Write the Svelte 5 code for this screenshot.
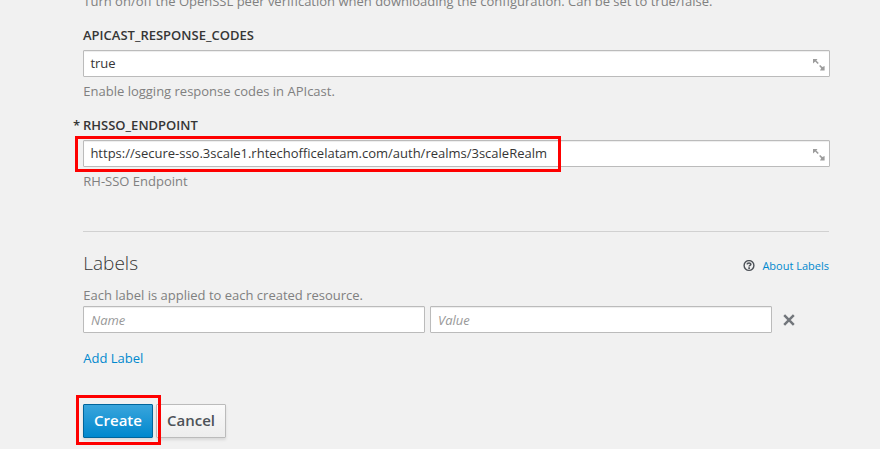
<script>
  let codes = $state('true');
  let endpoint = $state('https://secure-sso.3scale1.rhtechofficelatam.com/auth/realms/3scaleRealm');
  let labelName = $state('');
  let labelValue = $state('');
</script>

{#snippet expand()}
  <svg class="expand" width="12" height="12" viewBox="0 0 12 12" aria-hidden="true">
    <path d="M0 0h4.5L3.3 1.4 5.8 3.9 4.6 5 2.2 2.6 1.4 3.3 0 4.5zM6.1 7.1 7.2 6 9.3 8.1 11.6 7v4.5H7l1.2-2.3z" fill="#9c9c9c" />
  </svg>
{/snippet}

<main>
  <p class="help first">Turn on/off the OpenSSL peer verification when downloading the configuration. Can be set to true/false.</p>

  <div class="field">
    <label for="codes">APICAST_RESPONSE_CODES</label>
    <div class="control">
      <input id="codes" bind:value={codes} />
      {@render expand()}
    </div>
    <p class="help">Enable logging response codes in APIcast.</p>
  </div>

  <div class="field">
    <label class="required" for="endpoint">RHSSO_ENDPOINT</label>
    <div class="control">
      <input id="endpoint" spellcheck="false" bind:value={endpoint} />
      {@render expand()}
      <span class="mark mark-endpoint"></span>
    </div>
    <p class="help">RH-SSO Endpoint</p>
  </div>

  <section>
    <header>
      <h2>Labels</h2>
      <a class="about" href="#about">
        <svg width="12" height="12" viewBox="0 0 12 12" fill="none" stroke="#4d5258" aria-hidden="true">
          <circle cx="6" cy="5.5" r="4.9" stroke-width="1.4" />
          <path d="M4.1 4.4C4.3 2.6 7.8 2.5 7.8 4.4 7.8 5.4 6.1 5.4 6.1 6.6" stroke-width="1.6" />
          <path d="M6.1 7.3v1.6" stroke-width="1.7" />
        </svg>
        <span>About Labels</span>
      </a>
    </header>
    <p class="help">Each label is applied to each created resource.</p>
    <div class="pair">
      <input placeholder="Name" aria-label="Name" bind:value={labelName} />
      <input placeholder="Value" aria-label="Value" bind:value={labelValue} />
      <button class="remove" aria-label="Remove">
        <svg width="12" height="12" viewBox="0 0 12 12"><path d="M1.2 1.2l9.6 9.6M10.8 1.2l-9.6 9.6" stroke="#72767b" stroke-width="2.5" /></svg>
      </button>
    </div>
    <a class="add" href="#add">Add Label</a>
  </section>

  <div class="actions">
    <button class="btn primary">Create</button>
    <button class="btn">Cancel</button>
    <span class="mark mark-create"></span>
  </div>
</main>

<style>
  :global(body) {
    background: #f1f1f1;
    overflow: hidden;
  }
  main {
    box-sizing: border-box;
    width: 747px;
    height: 449px;
    margin-left: 83px;
    overflow: visible;
    font: 13px/22px 'Open Sans', sans-serif;
    color: #363636;
    display: flex;
    flex-direction: column;
  }
  p, h2 {
    margin: 0;
  }
  .help {
    color: #808080;
    height: 22px;
    padding-left: 0.3px;
  }
  .first {
    margin-top: -10px;
  }
  .field {
    padding-top: 12px;
    height: 78px;
  }
  label {
    display: block;
    position: relative;
    height: 26px;
    font-weight: 600;
  }
  .required::before {
    content: '*';
    position: absolute;
    left: -10px;
  }
  .control {
    position: relative;
    margin-bottom: 3px;
    height: 27px;
  }
  input {
    display: block;
    box-sizing: border-box;
    width: 100%;
    height: 27px;
    margin: 0;
    padding: 0 6px 1px;
    border: 1px solid #bbb;
    border-radius: 1px;
    background: #fff;
    box-shadow: inset 0 1px 1px rgba(0, 0, 0, 0.075);
    font: inherit;
    color: #363636;
    outline: none;
  }
  .control input {
    padding-left: 6.4px;
  }
  input::placeholder {
    color: #999;
    font-style: italic;
    opacity: 1;
  }
  .expand {
    position: absolute;
    right: 5px;
    top: 9px;
  }
  .mark {
    position: absolute;
    box-sizing: border-box;
    border: 3px solid #fe0000;
    pointer-events: none;
  }
  .mark-endpoint {
    left: -8px;
    top: -4px;
    width: 486px;
    height: 36px;
  }
  section {
    width: 746px;
    margin-top: 39px;
    border-top: 1px solid #d1d1d1;
    padding-top: 20px;
    height: 117px;
  }
  header {
    display: flex;
    justify-content: space-between;
    height: 32px;
  }
  h2 {
    padding-left: 0.3px;
    font-size: 19px;
    line-height: 22px;
    font-weight: 300;
  }
  a {
    color: #0088ce;
    text-decoration: none;
  }
  .about {
    display: flex;
    align-items: center;
    gap: 7px;
    height: 28px;
    font-size: 11px;
  }
  .pair {
    display: grid;
    grid-template-columns: 342px 342px 23px;
    column-gap: 5px;
    height: 27px;
  }
  .pair input {
    padding: 0 7px;
  }
  .remove {
    padding: 0;
    border: 0;
    background: none;
    display: flex;
    align-items: center;
    justify-content: center;
  }
  .add {
    display: inline-block;
    margin: 14px 0 0 0.3px;
  }
  .actions {
    position: relative;
    display: flex;
    gap: 3px;
    margin-top: 35px;
  }
  .btn {
    box-sizing: border-box;
    width: 70px;
    height: 34px;
    padding: 0 0 2px;
    border: 1px solid #bbb;
    border-radius: 1px;
    background: linear-gradient(#fafafa, #ededed);
    box-shadow: 0 2px 3px rgba(3, 3, 3, 0.1);
    color: #4d5258;
    font: 600 15px/22px 'Open Sans', sans-serif;
  }
  .primary {
    border-color: #00659c;
    background: linear-gradient(#39a5dc, #0088ce);
    color: #fff;
  }
  .mark-create {
    left: -7px;
    top: -9px;
    width: 85px;
    height: 50px;
  }
</style>
